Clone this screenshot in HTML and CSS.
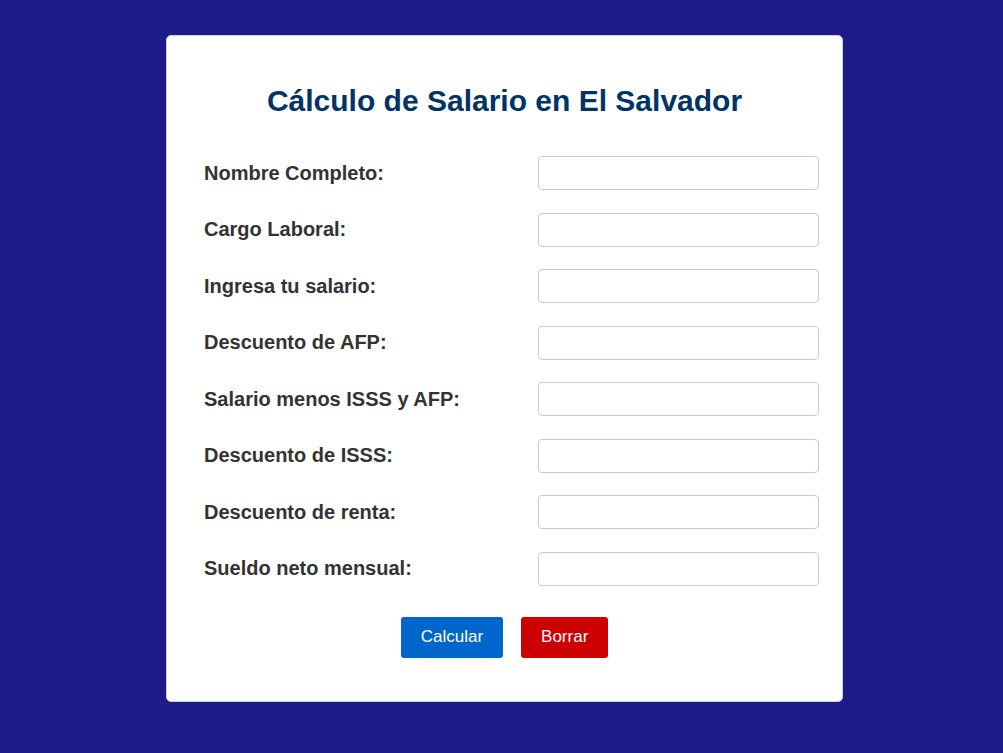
FILE: index.html
```html
<!DOCTYPE html>
<html lang="es">
<head>
<meta charset="utf-8">
<title>Cálculo de Salario en El Salvador</title>
<link rel="stylesheet" href="styles.css">
</head>
<body>
<div class="card">
  <h1 class="title">Cálculo de Salario en El Salvador</h1>
  <form class="form">
    <label class="label" for="nombre">Nombre Completo:</label>
    <input class="field" id="nombre" type="text">
    <label class="label" for="cargo">Cargo Laboral:</label>
    <input class="field" id="cargo" type="text">
    <label class="label" for="salario">Ingresa tu salario:</label>
    <input class="field" id="salario" type="text">
    <label class="label" for="afp">Descuento de AFP:</label>
    <input class="field" id="afp" type="text">
    <label class="label" for="menos">Salario menos ISSS y AFP:</label>
    <input class="field" id="menos" type="text">
    <label class="label" for="isss">Descuento de ISSS:</label>
    <input class="field" id="isss" type="text">
    <label class="label" for="renta">Descuento de renta:</label>
    <input class="field" id="renta" type="text">
    <label class="label" for="neto">Sueldo neto mensual:</label>
    <input class="field" id="neto" type="text">
  </form>
  <div class="actions">
    <button class="btn btn-calc" type="button">Calcular</button>
    <button class="btn btn-clear" type="button">Borrar</button>
  </div>
</div>
</body>
</html>
```
FILE: styles.css
```css
* { box-sizing: border-box; }
html, body { margin: 0; padding: 0; }
body {
  background: #1e1a8a;
  font-family: "Liberation Sans", Arial, sans-serif;
  padding-top: 35px;
  min-height: 753px;
}
.card {
  width: 677px;
  margin: 0 0 0 166px;
  background: #fff;
  border: 1px solid #d0d0d8;
  border-radius: 5px;
  padding: 37px 23px 43px 37px;
}
.title {
  margin: 0 0 0 -14px;
  text-align: center;
  color: #003366;
  font-size: 30px;
  font-weight: bold;
  line-height: 56px;
  height: 83px;
}
.form {
  display: grid;
  grid-template-columns: 334px 281px;
  row-gap: 22.5px;
  align-items: center;
}
.label {
  font-size: 20px;
  font-weight: bold;
  color: #333;
}
.field {
  height: 34px;
  width: 281px;
  border: 1px solid #ccc;
  border-radius: 4px;
  padding: 0 8px;
  font-family: inherit;
  font-size: 16px;
}
.actions {
  display: flex;
  justify-content: center;
  gap: 18px;
  margin: 31px 0 0 -14px;
}
.btn {
  height: 41px;
  border: none;
  border-radius: 3px;
  color: #fff;
  font-family: inherit;
  font-size: 17px;
  padding: 0 20px;
  cursor: pointer;
}
.btn-calc { background: #0066cc; }
.btn-clear { background: #cc0000; }
```
